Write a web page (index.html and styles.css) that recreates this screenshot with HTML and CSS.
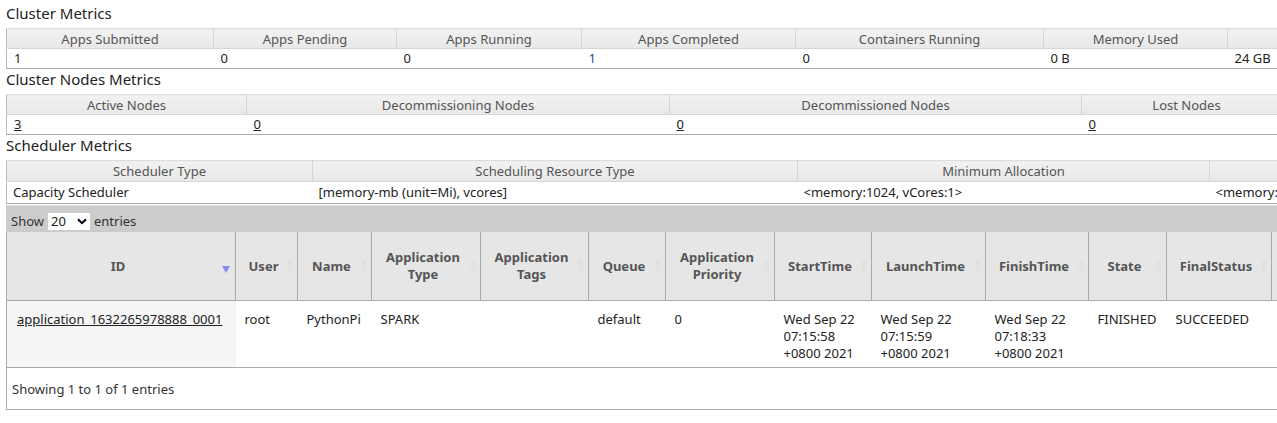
FILE: index.html
```html
<!DOCTYPE html>
<html>
<head>
<meta charset="utf-8">
<link rel="stylesheet" href="styles.css">
</head>
<body>
<div class="page">
  <h3 class="sec">Cluster Metrics</h3>
  <table class="metrics m1">
    <colgroup><col style="width:207px"><col style="width:183px"><col style="width:185px"><col style="width:214px"><col style="width:248px"><col style="width:184px"><col style="width:210px"><col style="width:180px"><col style="width:150px"><col style="width:150px"><col style="width:150px"></colgroup>
    <tr><th>Apps Submitted</th><th>Apps Pending</th><th>Apps Running</th><th>Apps Completed</th><th>Containers Running</th><th>Memory Used</th><th>Memory Total</th><th>Memory Reserved</th><th>VCores Used</th><th>VCores Total</th><th>VCores Reserved</th></tr>
    <tr><td>1</td><td>0</td><td>0</td><td class="blue">1</td><td>0</td><td>0 B</td><td>24 GB</td><td>0 B</td><td>0</td><td>24</td><td>0</td></tr>
  </table>
  <h3 class="sec">Cluster Nodes Metrics</h3>
  <table class="metrics m2">
    <colgroup><col style="width:240px"><col style="width:423px"><col style="width:412px"><col style="width:210px"><col style="width:250px"><col style="width:250px"></colgroup>
    <tr><th>Active Nodes</th><th>Decommissioning Nodes</th><th>Decommissioned Nodes</th><th>Lost Nodes</th><th>Unhealthy Nodes</th><th>Rebooted Nodes</th></tr>
    <tr><td><a href="#">3</a></td><td><a href="#">0</a></td><td><a href="#">0</a></td><td><a href="#">0</a></td><td><a href="#">0</a></td><td><a href="#">0</a></td></tr>
  </table>
  <h3 class="sec">Scheduler Metrics</h3>
  <table class="metrics m3">
    <colgroup><col style="width:306px"><col style="width:485px"><col style="width:412px"><col style="width:412px"><col style="width:260px"></colgroup>
    <tr><th>Scheduler Type</th><th>Scheduling Resource Type</th><th>Minimum Allocation</th><th>Maximum Allocation</th><th>Maximum Cluster Application Priority</th></tr>
    <tr><td>Capacity Scheduler</td><td>[memory-mb (unit=Mi), vcores]</td><td>&lt;memory:1024, vCores:1&gt;</td><td>&lt;memory:8192, vCores:4&gt;</td><td>0</td></tr>
  </table>

  <div class="dt">
    <div class="dt-top">Show <span class="sel">20<svg class="chev" width="10" height="7" viewBox="0 0 10 7"><path d="M1 1.2 L5 5.2 L9 1.2" fill="none" stroke="#000" stroke-width="2"/></svg></span> entries</div>
    <table class="apps">
      <colgroup><col style="width:229px"><col style="width:62px"><col style="width:74px"><col style="width:109px"><col style="width:108px"><col style="width:77px"><col style="width:109px"><col style="width:97px"><col style="width:114px"><col style="width:103px"><col style="width:78px"><col style="width:105px"><col style="width:120px"><col style="width:120px"></colgroup>
      <thead>
        <tr>
          <th class="sorted">ID<span class="desc"></span></th>
          <th>User<span class="both"></span></th>
          <th>Name<span class="both"></span></th>
          <th>Application<br>Type<span class="both"></span></th>
          <th>Application<br>Tags<span class="both"></span></th>
          <th>Queue<span class="both"></span></th>
          <th>Application<br>Priority<span class="both"></span></th>
          <th>StartTime<span class="both"></span></th>
          <th>LaunchTime<span class="both"></span></th>
          <th>FinishTime<span class="both"></span></th>
          <th>State<span class="both"></span></th>
          <th>FinalStatus<span class="both"></span></th>
          <th>Running<br>Containers<span class="both"></span></th>
          <th>Allocated<br>CPU<span class="both"></span></th>
        </tr>
      </thead>
      <tbody>
        <tr>
          <td class="idc"><a href="#">application_1632265978888_0001</a></td>
          <td>root</td>
          <td>PythonPi</td>
          <td>SPARK</td>
          <td></td>
          <td>default</td>
          <td>0</td>
          <td>Wed Sep 22<br>07:15:58<br>+0800 2021</td>
          <td>Wed Sep 22<br>07:15:59<br>+0800 2021</td>
          <td>Wed Sep 22<br>07:18:33<br>+0800 2021</td>
          <td>FINISHED</td>
          <td>SUCCEEDED</td>
          <td>N/A</td>
          <td>N/A</td>
        </tr>
      </tbody>
    </table>
    <div class="dt-foot">Showing 1 to 1 of 1 entries</div>
  </div>
</div>
</body>
</html>
```

FILE: styles.css
```css
html, body {
  margin: 0;
  padding: 0;
  overflow: hidden;
  background: #fff;
}
body {
  font-family: "Noto Sans", "Open Sans", sans-serif;
  font-size: 13px;
  color: #222;
}
.page {
  padding: 3px 0 0 6px;
  width: 2200px;
}
.sec {
  margin: 0 0 5px 0;
  font-size: 15px;
  font-weight: normal;
  line-height: 20px;
  height: 20px;
  color: #222;
}
.metrics {
  border-collapse: collapse;
  table-layout: fixed;
  border-left: 1px solid #bbb;
}
.m1 { width: 2061px; }
.m2 { width: 1785px; }
.m3 { width: 1875px; }
.metrics th {
  height: 18px;
  padding: 1px 0 0 0;
  font-weight: normal;
  color: #555;
  background: linear-gradient(#f2f2f2, #e8e8e8);
  border-top: 1px solid #ddd;
  border-right: 1px solid #d6d6d6;
  border-bottom: 1px solid #d6d6d6;
  text-align: center;
  line-height: 18px;
  white-space: nowrap;
}
.metrics td {
  height: 19px;
  padding: 0 7px;
  border-bottom: 1px solid #aaa;
  line-height: 19px;
  white-space: nowrap;
  text-align: left;
}
.metrics td.blue { color: #1f4f80; }
.metrics a { color: #222; }
.m3 th { height: 20px; line-height: 20px; padding: 0; }
.m3 td { padding: 0 6px; height: 20px; line-height: 21px; }

.dt {
  margin-top: 1px;
  width: 2200px;
}
.dt-top {
  background: #cccccc;
  border-top: 1px solid #dadada;
  height: 22px;
  padding: 4px 0 0 5px;
  color: #333;
  display: flex;
  align-items: center;
  gap: 4px;
}
.sel {
  background: #fff;
  height: 17px;
  width: 42px;
  box-sizing: border-box;
  display: flex;
  align-items: center;
  justify-content: space-between;
  padding: 0 3px 0 3px;
  line-height: 17px;
  color: #222;
}
.chev { display: block; }
.apps {
  border-collapse: collapse;
  table-layout: fixed;
  width: 1385px;
  border-left: 1px solid #aaa;
}
.apps th {
  position: relative;
  background: #e6e6e6;
  color: #555;
  font-weight: bold;
  height: 68px;
  padding: 0 12px 0 6px;
  border-right: 1px solid #aaa;
  border-bottom: 1px solid #aaa;
  line-height: 17px;
  text-align: center;
}
.apps th .both {
  position: absolute;
  right: 3px;
  top: 50%;
  margin-top: -8px;
  width: 7px;
  height: 16px;
}
.apps th .both::before,
.apps th .both::after {
  content: "";
  position: absolute;
  left: 0;
  border-left: 3.5px solid transparent;
  border-right: 3.5px solid transparent;
}
.apps th .both::before {
  top: 1px;
  border-bottom: 6px solid #e0e0e0;
}
.apps th .both::after {
  bottom: 1px;
  border-top: 6px solid #e0e0e0;
}
.apps th .desc {
  position: absolute;
  right: 5px;
  top: 50%;
  margin-top: 0px;
  border-left: 4px solid transparent;
  border-right: 4px solid transparent;
  border-top: 7px solid #8a8aea;
}
.apps td {
  vertical-align: top;
  padding: 10px 9px 0 9px;
  height: 56px;
  border-bottom: 1px solid #aaa;
  line-height: 17px;
  color: #222;
}
.apps td.idc {
  background: #f5f5f5;
  padding-left: 10px;
}
.apps td a { color: #222; }
.dt-foot {
  border-left: 1px solid #aaa;
  border-bottom: 1px solid #aaa;
  height: 41px;
  line-height: 42px;
  padding-left: 5px;
  color: #333;
  width: 1265px;
}
```
